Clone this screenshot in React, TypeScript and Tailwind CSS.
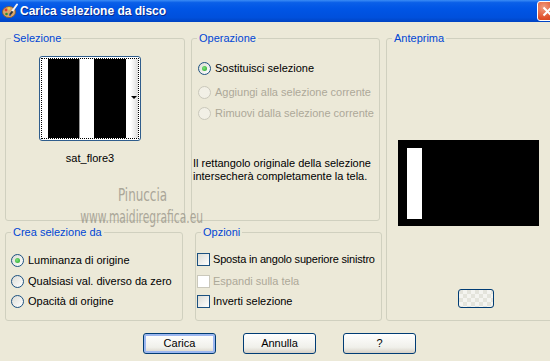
import React from 'react';

const font = "font-['Liberation_Sans',Arial,sans-serif]";

function Radio({ checked = false, disabled = false }: { checked?: boolean; disabled?: boolean }) {
  return (
    <span
      className={`relative flex h-[13px] w-[13px] shrink-0 items-center justify-center rounded-full border ${
        disabled
          ? 'border-[#cac8bb] bg-[#f2f0e6]'
          : 'border-[#1c5180] bg-[linear-gradient(135deg,#dcdcd5,#ffffff)]'
      }`}
    >
      {checked && (
        <span className="h-[5px] w-[5px] rounded-full bg-[radial-gradient(circle_at_40%_40%,#7ee27e,#21a121)]" />
      )}
    </span>
  );
}

function Check({ disabled = false }: { disabled?: boolean }) {
  return (
    <span
      className={`h-[13px] w-[13px] shrink-0 border ${
        disabled
          ? 'border-[#cac8bb] bg-white'
          : 'border-[#1c5180] bg-[linear-gradient(135deg,#dcdcd5,#ffffff)]'
      }`}
    />
  );
}

function Group({
  label,
  className,
  children,
}: {
  label: string;
  className: string;
  children?: React.ReactNode;
}) {
  return (
    <fieldset className={`rounded-[3px] border border-[#d0d0bf] ${className}`}>
      <legend className="ml-[5px] px-[2px] text-[11px] leading-[13px] text-[#0046d5]">{label}</legend>
      {children}
    </fieldset>
  );
}

function XpButton({ children, focused = false }: { children?: React.ReactNode; focused?: boolean }) {
  return (
    <button
      className={`flex h-[21px] w-[73px] items-center justify-center rounded-[3px] border border-[#003c74] bg-[linear-gradient(180deg,#ffffff,#f0f0ea_70%,#d6d0c5)] text-[11px] text-black ${
        focused ? 'shadow-[inset_0_0_0_2px_#9cb7f0]' : ''
      }`}
    >
      {children}
    </button>
  );
}

function TitleIcon() {
  return (
    <svg width="16" height="16" viewBox="0 0 16 16">
      <ellipse cx="7" cy="9" rx="6.5" ry="5.5" fill="#d9a66b" stroke="#8a5a2b" strokeWidth="0.8" />
      <circle cx="4" cy="7" r="1.4" fill="#e23b2e" />
      <circle cx="7" cy="5.5" r="1.3" fill="#f2d43a" />
      <circle cx="4.5" cy="11" r="1.3" fill="#2f8f3a" />
      <circle cx="8" cy="12" r="1.1" fill="#2d5fd0" />
      <path d="M9 10 L15 1.5" stroke="#f4f4f4" strokeWidth="2" strokeLinecap="round" />
      <path d="M8.5 10.8 L10 9" stroke="#333" strokeWidth="2" strokeLinecap="round" />
    </svg>
  );
}

export default function App() {
  return (
    <div className={`relative h-[361px] w-[550px] overflow-hidden bg-[#ece9d8] text-[11px] leading-[13px] text-black ${font}`}>
      {/* title bar */}
      <div className="flex h-[22px] items-center bg-[linear-gradient(180deg,#3b8cf5_0%,#0a5fe8_12%,#0055e5_40%,#0050dc_80%,#0043c2_100%)] pl-[2px]">
        <TitleIcon />
        <span className="ml-[2px] text-[12px] font-bold text-white [text-shadow:1px_1px_0_#0a2a8a]">
          Carica selezione da disco
        </span>
        <div className="ml-auto mr-[-8px] flex h-[20px] w-[21px] items-center justify-center rounded-[3px] border border-white bg-[radial-gradient(circle_at_30%_30%,#f09c80,#e0502a_60%,#c23a16)]">
          <svg width="11" height="11" viewBox="0 0 11 11">
            <path d="M1.5 1.5 L9.5 9.5 M9.5 1.5 L1.5 9.5" stroke="white" strokeWidth="2" />
          </svg>
        </div>
      </div>

      <div className="flex pl-[5px] pt-[10px]">
        <div className="flex w-[377px] shrink-0 flex-col">
          <div className="flex gap-[6px]">
            <Group label="Selezione" className="h-[189px] w-[180px]">
              <div className="ml-[33px] mt-[11px] flex w-[102px] flex-col items-center">
                <div className="h-[85px] w-[102px] rounded-[3px] border border-[#2f5d8c] bg-white p-[1px]">
                  <div className="flex h-full w-full border border-dotted border-black">
                    <div className="w-[6px] bg-white" />
                    <div className="w-[31px] bg-black" />
                    <div className="w-[1px] bg-[#9a9a9a]" />
                    <div className="w-[14px] bg-white" />
                    <div className="w-[32px] bg-black" />
                    <div className="relative flex-1 bg-[linear-gradient(90deg,#ffffff,#ffffff_40%,#dcdcdc)]">
                      <span className="absolute right-[1px] top-[37px] h-0 w-0 border-x-[3px] border-t-[3px] border-x-transparent border-t-black" />
                    </div>
                  </div>
                </div>
                <div className="mt-[11px]">sat_flore3</div>
              </div>
            </Group>
            <Group label="Operazione" className="h-[189px] w-[189px]">
              <div className="ml-[6px] mt-[17px] flex flex-col">
                <div className="flex items-center gap-[4px]">
                  <Radio checked />
                  <span>Sostituisci selezione</span>
                </div>
                <div className="mt-[11px] flex items-center gap-[4px] text-[#aca899]">
                  <Radio disabled />
                  <span>Aggiungi alla selezione corrente</span>
                </div>
                <div className="mt-[8px] flex items-center gap-[4px] text-[#aca899]">
                  <Radio disabled />
                  <span>Rimuovi dalla selezione corrente</span>
                </div>
              </div>
              <p className="ml-[1px] mt-[37px]">
                Il rettangolo originale della selezione
                <br />
                intersecherà completamente la tela.
              </p>
            </Group>
          </div>

          <div className="mt-[5px] flex gap-[12px]">
            <Group label="Crea selezione da" className="h-[95px] w-[178px]">
              <div className="ml-[5px] mt-[15px] flex flex-col">
                <div className="flex items-center gap-[4px]">
                  <Radio checked />
                  <span>Luminanza di origine</span>
                </div>
                <div className="mt-[8px] flex items-center gap-[4px]">
                  <Radio />
                  <span>Qualsiasi val. diverso da zero</span>
                </div>
                <div className="mt-[7px] flex items-center gap-[4px]">
                  <Radio />
                  <span>Opacità di origine</span>
                </div>
              </div>
            </Group>
            <Group label="Opzioni" className="h-[95px] w-[187px]">
              <div className="ml-[1px] mt-[14px] flex flex-col whitespace-nowrap">
                <div className="flex items-center gap-[3px]">
                  <Check />
                  <span className="tracking-[-0.2px]">Sposta in angolo superiore sinistro</span>
                </div>
                <div className="mt-[9px] flex items-center gap-[3px] text-[#aca899]">
                  <Check disabled />
                  <span>Espandi sulla tela</span>
                </div>
                <div className="mt-[7px] flex items-center gap-[3px]">
                  <Check />
                  <span>Inverti selezione</span>
                </div>
              </div>
            </Group>
          </div>
        </div>

        <Group label="Anteprima" className="ml-[4px] h-[289px] w-[182px] shrink-0">
          <div className="ml-[11px] mt-[95px] h-[86px] w-[141px] bg-black pl-[9px] pt-[8px]">
            <div className="h-[71px] w-[15px] bg-white" />
          </div>
          <div className="ml-[71px] mt-[63px] h-[19px] w-[36px] rounded-[3px] border border-[#003c74] bg-[conic-gradient(#f4f4f0_25%,#e4e4dc_0_50%,#f4f4f0_0_75%,#e4e4dc_0)] bg-[length:8px_8px]" />
        </Group>
      </div>

      <div className="mt-[12px] flex gap-[27px] pl-[143px]">
        <XpButton focused>Carica</XpButton>
        <XpButton>Annulla</XpButton>
        <XpButton>?</XpButton>
      </div>

      {/* watermark */}
      <div className="pointer-events-none absolute left-[87px] top-[186px] flex w-[110px] flex-col items-center font-['DejaVu_Sans_Condensed','DejaVu_Sans',sans-serif] text-[#9a968a] opacity-80">
        <span className="origin-center scale-x-[0.78] text-[17px] leading-[18px]">Pinuccia</span>
        <span className="mt-[4px] origin-center scale-x-[0.7] whitespace-nowrap text-[17px] leading-[18px]">
          www.maidiregrafica.eu
        </span>
      </div>
    </div>
  );
}
